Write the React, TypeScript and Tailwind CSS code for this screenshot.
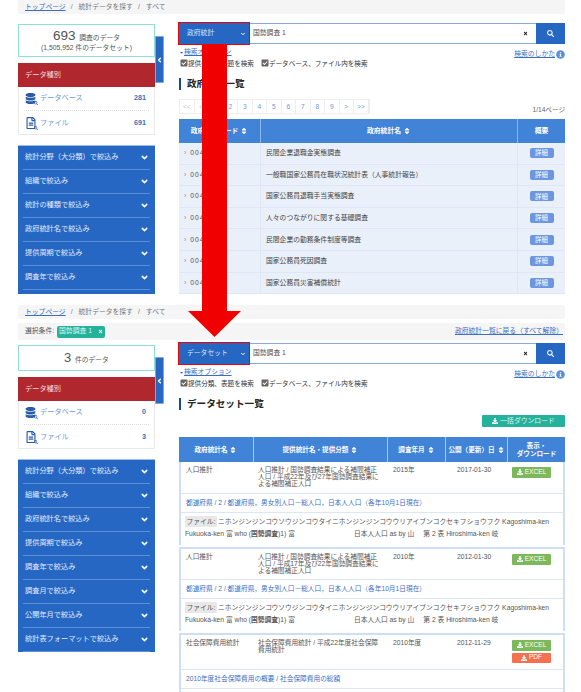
import React from "react";
import { ChevronDown, ChevronLeft } from "lucide-react";
import { FaDatabase, FaRegFileAlt, FaSearch, FaSort, FaDownload, FaInfoCircle, FaTimes, FaCaretDown, FaCheckSquare } from "react-icons/fa";

const Breadcrumb = () => (
  <div className="h-[14px] bg-[#f5f5f5] rounded-[2px] pl-[7px] flex items-center gap-[5px] text-[6.8px] text-[#777]">
    <span className="text-[#3b6fc4] underline">トップページ</span>
    <span>/</span>
    <span className="ml-[1px]">統計データを探す</span>
    <span>/</span>
    <span className="ml-[1px]">すべて</span>
  </div>
);

const Filter = ({ label }: { label: string }) => (
  <div className="mx-[5px] h-[24px] border-b border-[#5b8fdc] flex items-center justify-between pl-[2px] pr-[1px] text-[7.2px] text-[#e3ecfa]">
    <span>{label}</span>
    <ChevronDown size={9} strokeWidth={4} className="text-white" />
  </div>
);

const Kind = ({ icon, label, n, border }: { icon: React.ReactNode; label: string; n: string; border?: boolean }) => (
  <div className={`h-[24px] mx-[5px] flex items-center ${border ? "border-b border-dotted border-[#ddd]" : ""}`}>
    <div className="relative w-[15px] ml-[1px] text-[#2a5ca8]">
      {icon}
      <FaSearch size={4} className="absolute -bottom-[1px] right-[2px]" />
    </div>
    <span className="text-[7.2px] text-[#6f97d8] flex-1">{label}</span>
    <span className="text-[7.2px] font-bold text-[#3a6fc0] mr-[3px]">{n}</span>
  </div>
);

const Sidebar = ({ head, kinds, filters, headH, gap, tail }: { head: React.ReactNode; kinds: [string, string]; filters: string[]; headH: string; gap: string; tail?: boolean }) => (
  <div className="w-[137px] shrink-0">
    <div className={`${headH} border border-[#8fe0d4] flex flex-col items-center justify-center text-[#555]`}>{head}</div>
    <div className={`${gap} h-[24px] bg-[#b0282e] text-[7.2px] text-[#f4dcdc] flex items-center pl-[7px]`}>データ種別</div>
    <div className="border-x border-b border-[#e8e8e8] h-[48px]">
      <Kind icon={<FaDatabase size={11} />} label="データベース" n={kinds[0]} border />
      <Kind icon={<FaRegFileAlt size={12} />} label="ファイル" n={kinds[1]} />
    </div>
    <div className="mt-[10px] bg-[#2667c4] border-t border-[#9dbdea]">
      {filters.map((f) => <Filter key={f} label={f} />)}
      {tail && <div className="h-[4px]" />}
    </div>
  </div>
);

const Toggle = ({ mt }: { mt: string }) => (
  <div className={`${mt} w-[9px] h-[47px] bg-[#2667c4] border border-[#7fa6e0] rounded-r-[1px] flex items-center justify-center shrink-0`}>
    <ChevronLeft size={8} strokeWidth={5} className="text-white" />
  </div>
);

const SearchBar = ({ label }: { label: string }) => (
  <div className="h-[21px] flex">
    <div className="w-[70px] h-[21px] bg-[#2667c4] outline-[1.5px] outline-[#f00000] flex items-center justify-between pl-[8px] pr-[3px] text-[6.8px] text-[#dbe6f7] z-10 shrink-0">
      <span>{label}</span>
      <ChevronDown size={6} strokeWidth={4} className="text-white" />
    </div>
    <div className="flex-1 border-y border-[#8aa9e0] bg-white flex items-center justify-between pl-[4px] pr-[8px] text-[6.8px] text-[#555]">
      <span>国勢調査 1</span>
      <FaTimes size={5} className="text-[#222]" />
    </div>
    <div className="w-[29px] bg-[#2667c4] flex items-center justify-center shrink-0">
      <FaSearch size={7} className="text-white" />
    </div>
  </div>
);

const Options = () => (
  <div className="relative">
    <div className="absolute right-0 top-[2px] flex items-center gap-[1px] text-[6.8px] text-[#3b6fc4]">
      <span className="underline">検索のしかた</span>
      <FaInfoCircle size={9} className="text-[#5b8fdc]" />
    </div>
    <div className="flex items-center text-[6.8px] text-[#3b6fc4] h-[10px] mt-[3px]">
      <FaCaretDown size={5} className="text-[#2a5ca8]" />
      <span className="underline">検索オプション</span>
    </div>
    <div className="flex items-center gap-[7px] text-[6.6px] text-[#333] h-[11px] mt-[1px] pl-[1px]">
      <span className="flex items-center"><FaCheckSquare size={8} className="text-[#666]" />提供分類、表題を検索</span>
      <span className="flex items-center"><FaCheckSquare size={8} className="text-[#666]" />データベース、ファイル内を検索</span>
    </div>
  </div>
);

const Title = ({ text, cls }: { text: string; cls: string }) => (
  <div className={`${cls} flex items-center h-[12px] border-l-[2px] border-[#0f4a9e] pl-[6px] text-[9.6px] font-bold text-[#222]`}>{text}</div>
);

const names = ["民間企業退職金実態調査", "一般職国家公務員在職状況統計表（人事統計報告）", "国家公務員退職手当実態調査", "人々のつながりに関する基礎調査", "民間企業の勤務条件制度等調査", "国家公務員死因調査", "国家公務員災害補償統計"];
const pages = ["<<", "<", "1", "2", "3", "4", "5", "6", "7", "8", "9", ">", ">>"];

const TopMain = () => (
  <div className="flex-1 min-w-0">
    <SearchBar label="政府統計" />
    <Options />
    <Title text="政府統計一覧" cls="mt-[9px]" />
    <div className="mt-[9px] flex items-end justify-between">
      <div className="flex h-[15px] border border-[#eee] text-[6.6px] text-[#6f97d8]">
        {pages.map((p, i) => (
          <span key={i} className={`w-[14.5px] flex items-center justify-center border-r border-[#eee] ${i < 2 ? "text-[#ccc]" : ""}`}>{p}</span>
        ))}
      </div>
      <span className="text-[6.6px] text-[#666] -mb-[1px]">1/14ページ</span>
    </div>
    <div className="mt-[5px] grid grid-cols-[81px_257px_48px] text-[6.8px]">
      <div className="h-[24px] bg-[#4183d7] text-white font-bold flex items-center justify-center gap-[2px]">政府統計コード <FaSort size={8} /></div>
      <div className="h-[24px] bg-[#4183d7] text-white font-bold flex items-center justify-center gap-[2px] border-l border-[#8cb4e8]">政府統計名 <FaSort size={8} /></div>
      <div className="h-[24px] bg-[#4183d7] text-white font-bold flex items-center justify-center border-l border-[#8cb4e8]">概要</div>
      {names.map((n, i) => (
        <React.Fragment key={n}>
          <div className="h-[21.6px] bg-[#eaf0f9] border-b border-[#dde7f6] flex items-center pl-[5px] text-[#555]"><span className="text-[#88a] mr-[4px]">›</span><span className="tracking-[1px]">00{450 + i}</span></div>
          <div className="h-[21.6px] bg-[#eaf0f9] border-b border-[#dde7f6] border-l flex items-center pl-[5px] text-[#444]">{n}</div>
          <div className="h-[21.6px] bg-[#eaf0f9] border-b border-[#dde7f6] border-l flex items-center justify-center">
            <span className="w-[24px] h-[10px] rounded-[2px] bg-[#6c97e0] text-white flex items-center justify-center text-[6.4px]">詳細</span>
          </div>
        </React.Fragment>
      ))}
    </div>
  </div>
);

const DlBtn = ({ label, color }: { label: string; color: string }) => (
  <div className={`${color} w-[39px] h-[10.5px] rounded-[1px] text-white flex items-center justify-center gap-[2px] text-[6.6px]`}>
    <FaDownload size={6} />{label}
  </div>
);

const FileRow = () => (
  <div className="border-t border-[#dbe6f7] pt-[3px] pl-[4px] pr-[2px] text-[6.75px] leading-[11px] text-[#555] whitespace-nowrap h-[33px]">
    <div><span className="bg-[#e8e8e8] px-[1.5px] py-[2px] rounded-[1px] mr-[1px]">ファイル:</span>ニホンジンジンコウソウジンコウタイニホンジンジンコウウリアイブンコクセキフショウフク Kagoshima-ken</div>
    <div className="mt-[1px]">Fukuoka-ken 富 who (<b>国勢調査</b>)1) 富<span className="ml-[59px]">日本人人口 as by 山</span><span className="ml-[9px]">第 2 表 Hiroshima-ken 岐</span></div>
  </div>
);

const Group = ({ a, b, c, d, link, rowH, file, top, pdf }: { a: string; b: string; c: string; d: string; link: string; rowH: string; file?: boolean; top?: boolean; pdf?: boolean }) => (
  <div className={`${top ? "mt-[2px] border-t-[2px]" : ""} border-x-[2px] border-[#d0def5] bg-white`}>
    <div className={`${rowH} grid grid-cols-[72px_134px_58px_62px_56px] text-[6.7px] leading-[6.9px] text-[#555] pt-[5px]`}>
      <div className="pl-[5px]">{a}</div>
      <div className="pl-[5px] pr-[6px]">{b}</div>
      <div className="pl-[6px]">{c}</div>
      <div className="pl-[12px]">{d}</div>
      <div className="pl-[5px] flex flex-col gap-[2px]">
        <DlBtn label="EXCEL" color="bg-[#7cb85c]" />
        {pdf && <DlBtn label="PDF" color="bg-[#f4704f]" />}
      </div>
    </div>
    <div className="h-[19px] border-t border-[#dbe6f7] flex items-center pl-[5px] text-[6.7px] text-[#3b6fc4]">{link}</div>
    {file ? <FileRow /> : <div className="h-[10px] border-t border-[#dbe6f7]" />}
  </div>
);

const linkA = "都道府県 / 2 / 都道府県，男女別人口－総人口，日本人人口（各年10月1日現在）";

const BottomMain = () => (
  <div className="flex-1 min-w-0">
    <SearchBar label="データセット" />
    <Options />
    <Title text="データセット一覧" cls="mt-[9px]" />
    <div className="flex justify-end mt-[5px]">
      <div className="w-[83px] h-[12px] bg-[#25b29c] rounded-[1px] text-white/85 text-[6.8px] flex items-center justify-center gap-[2px]">
        <FaDownload size={6} className="text-white" />一括ダウンロード
      </div>
    </div>
    <div className="mt-[10px]">
      <div className="grid grid-cols-[74px_134px_58px_62px_58px] text-[6.6px] text-white font-bold h-[25px] bg-[#4183d7]">
        <div className="flex items-center justify-center gap-[2px]">政府統計名 <FaSort size={8} /></div>
        <div className="flex items-center justify-center gap-[2px] border-l border-[#a8c8f0]">提供統計名・提供分類 <FaSort size={8} /></div>
        <div className="flex items-center justify-center gap-[2px] border-l border-[#a8c8f0]">調査年月 <FaSort size={8} /></div>
        <div className="flex items-center justify-center gap-[2px] border-l border-[#a8c8f0]">公開（更新）日 <FaSort size={8} /></div>
        <div className="flex items-center justify-center text-center leading-[8px] border-l border-[#a8c8f0]">表示・<br />ダウンロード</div>
      </div>
      <Group rowH="h-[31px]" a="人口推計" b="人口推計 / 国勢調査結果による補間補正人口 / 平成22年及び27年国勢調査結果による補間補正人口" c="2015年" d="2017-01-30" link={linkA} file />
      <Group top rowH="h-[30px]" a="人口推計" b="人口推計 / 国勢調査結果による補間補正人口 / 平成17年及び22年国勢調査結果による補間補正人口" c="2010年" d="2012-01-30" link={linkA} file />
      <Group top pdf rowH="h-[34px]" a="社会保障費用統計" b="社会保障費用統計 / 平成22年度社会保障費用統計" c="2010年度" d="2012-11-29" link="2010年度社会保障費用の概要 / 社会保障費用の総額" />
    </div>
  </div>
);

export default function App() {
  return (
    <div className="relative w-[581px] h-[692px] overflow-hidden bg-white pl-[18px] pr-[16px] font-['Liberation_Sans','Noto_Sans_CJK_JP',sans-serif]">
      <Breadcrumb />
      <div className="flex mt-[9px] h-[282px]">
        <div className="mt-[1px]">
          <Sidebar
            tail
            headH="h-[33px]"
            gap="mt-[6px]"
            head={<>
              <div className="leading-[13px] text-[13.5px]">693 <span className="text-[6.8px]">調査のデータ</span></div>
              <div className="leading-[8px] text-[6.8px]">(1,505,952 件のデータセット)</div>
            </>}
            kinds={["281", "691"]}
            filters={["統計分野（大分類）で絞込み", "組織で絞込み", "統計の種類で絞込み", "政府統計名で絞込み", "提供周期で絞込み", "調査年で絞込み"]}
          />
        </div>
        <Toggle mt="mt-[13px]" />
        <div className="ml-[15px] flex-1 min-w-0"><TopMain /></div>
      </div>
      <Breadcrumb />
      <div className="mt-[4px] h-[17px] bg-[#f5f5f5] flex items-center justify-between pl-[7px] pr-[2px] text-[6.8px] text-[#555]">
        <div className="flex items-center gap-[3px]">
          選択条件:
          <span className="h-[12px] px-[2px] bg-[#25b29c] rounded-[2px] text-[#d8f5ef] flex items-center gap-[6px]">国勢調査 1 <FaTimes size={5} className="text-white" /></span>
        </div>
        <span className="text-[#3b6fc4] underline">政府統計一覧に戻る（すべて解除）</span>
      </div>
      <div className="flex mt-[3px]">
        <div className="mt-[2px]">
          <Sidebar
            headH="h-[26px]"
            gap="mt-[6px]"
            head={<div className="text-[13px] leading-[13px]">3 <span className="text-[6.8px]">件のデータ</span></div>}
            kinds={["0", "3"]}
            filters={["統計分野（大分類）で絞込み", "組織で絞込み", "政府統計名で絞込み", "提供周期で絞込み", "調査年で絞込み", "調査月で絞込み", "公開年月で絞込み", "統計表フォーマットで絞込み"]}
          />
        </div>
        <Toggle mt="mt-[14px]" />
        <div className="ml-[15px] flex-1 min-w-0"><BottomMain /></div>
      </div>
      <svg className="absolute left-[188px] top-[44px]" width="54" height="294" viewBox="0 0 54 294">
        <polygon points="14,0 39,0 39,267 53,267 26.5,293 0,267 14,267" fill="#f00000" />
      </svg>
    </div>
  );
}
